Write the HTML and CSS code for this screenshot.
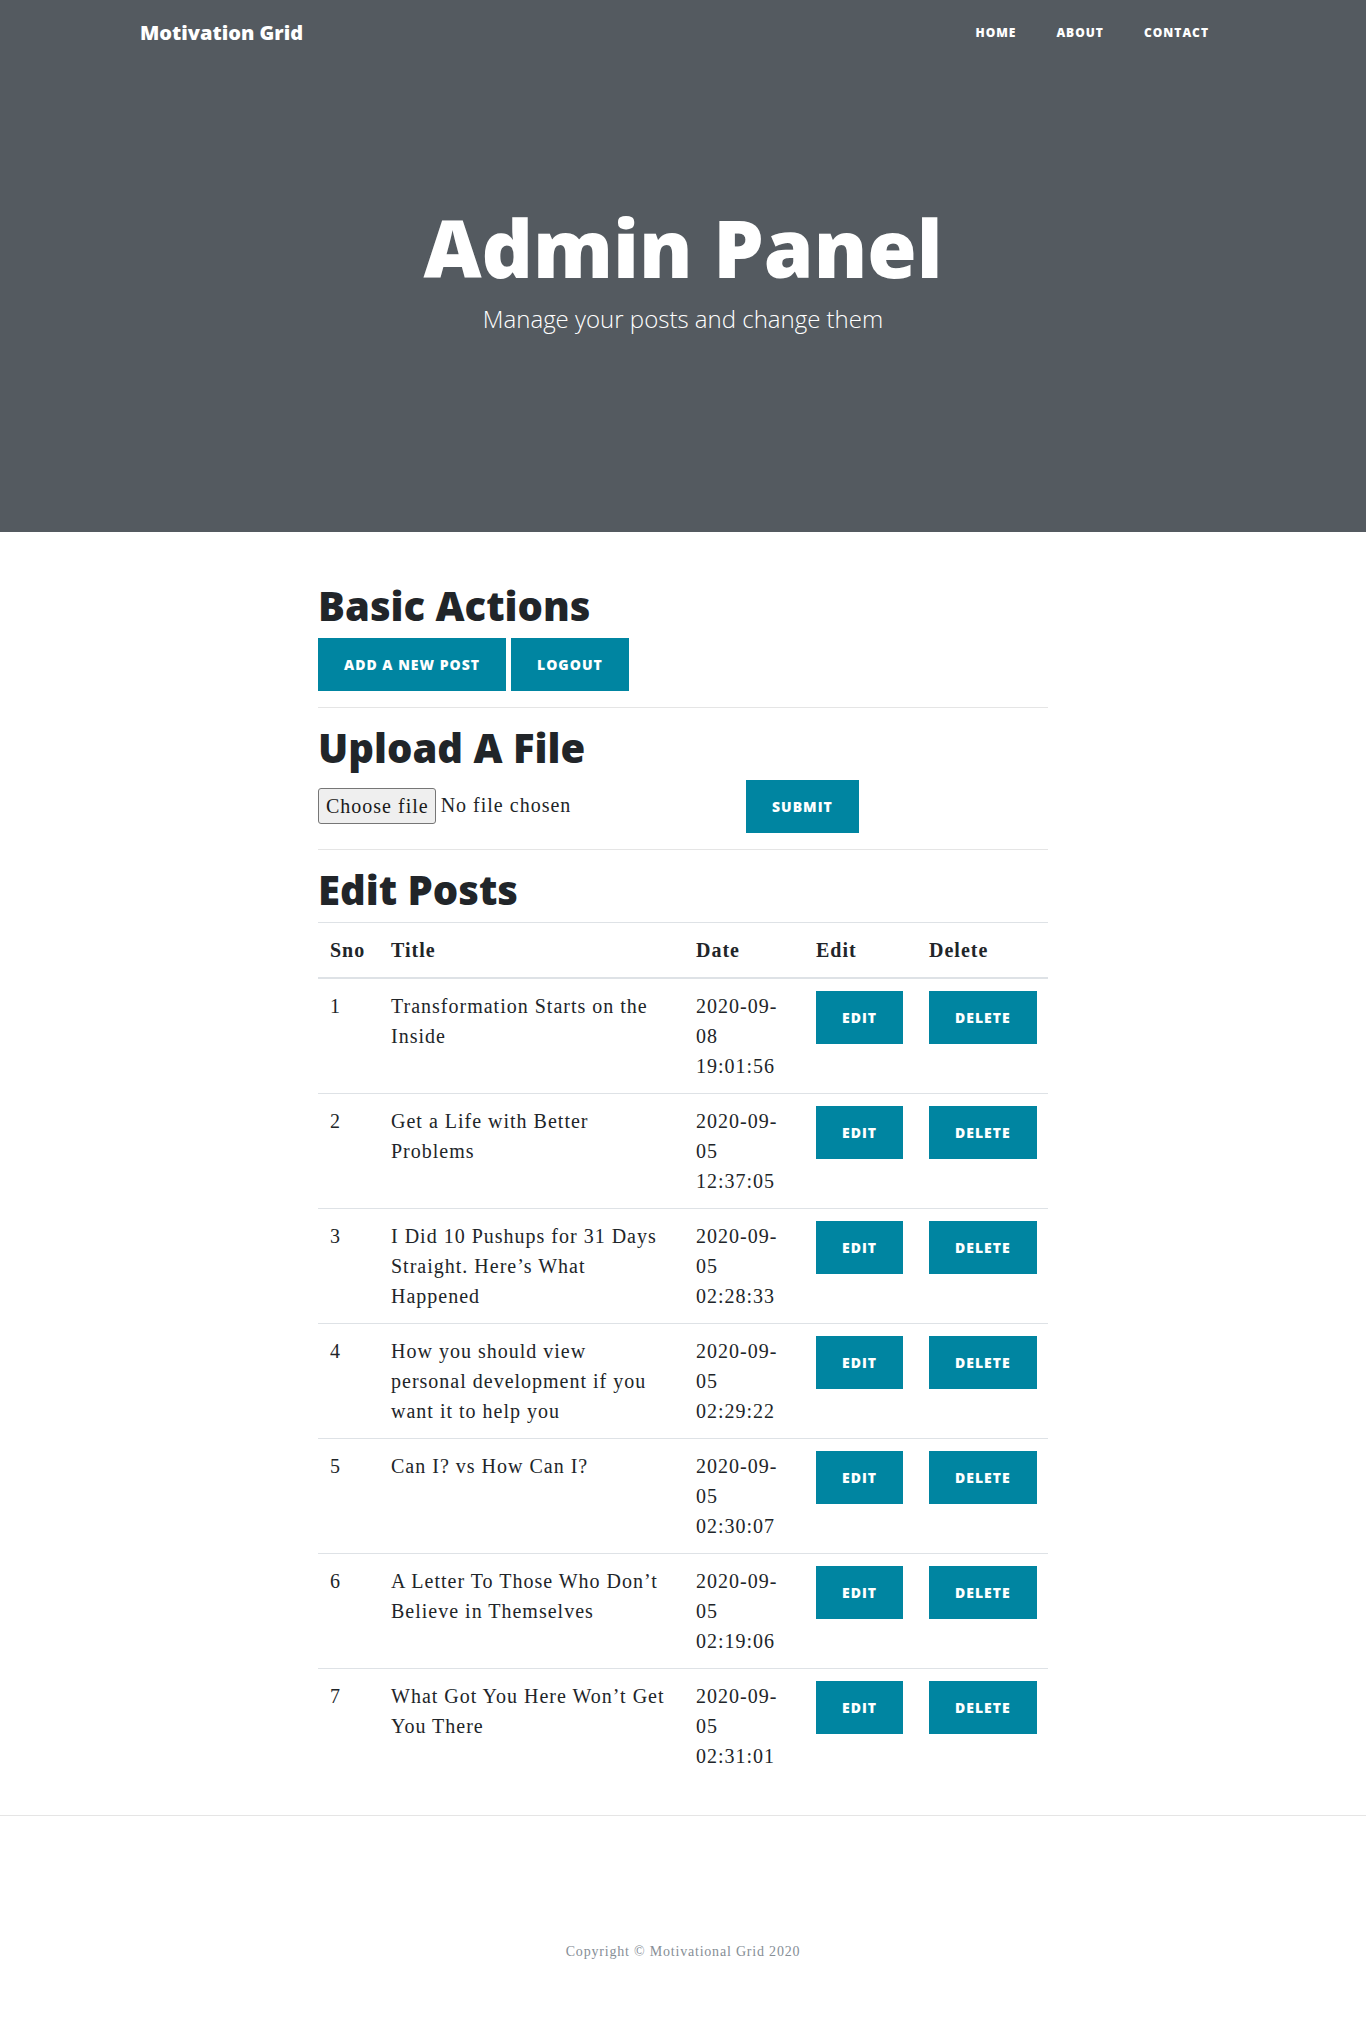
FILE: index.html
```html
<!DOCTYPE html>
<html lang="en">
<head>
<meta charset="utf-8">
<title>Admin Panel - Motivation Grid</title>
<link rel="stylesheet" href="styles.css">
</head>
<body>
<header class="masthead">
  <nav class="topnav">
    <div class="topnav-inner">
      <a class="brand" href="#">Motivation Grid</a>
      <ul class="nav-links">
        <li><a href="#">Home</a></li>
        <li><a href="#">About</a></li>
        <li><a href="#">Contact</a></li>
      </ul>
    </div>
  </nav>
  <div class="page-heading">
    <h1>Admin Panel</h1>
    <span class="subheading">Manage your posts and change them</span>
  </div>
</header>

<main class="content">
  <h1 class="section-title">Basic Actions</h1>
  <div class="actions">
    <a class="btn" href="#">Add a new post</a>
    <a class="btn" href="#">Logout</a>
  </div>
  <hr>
  <h1 class="section-title">Upload A File</h1>
  <form class="upload">
    <label class="file-picker">
      <input class="file-native" type="file" name="file1">
      <span class="file-btn">Choose file</span>
      <span class="file-name">No file chosen</span>
    </label>
    <button class="btn" type="button">Submit</button>
  </form>
  <hr>
  <h1 class="section-title">Edit Posts</h1>
  <table class="posts">
    <colgroup>
      <col class="c-sno"><col class="c-title"><col class="c-date"><col class="c-edit"><col class="c-del">
    </colgroup>
    <thead>
      <tr><th>Sno</th><th>Title</th><th>Date</th><th>Edit</th><th>Delete</th></tr>
    </thead>
    <tbody>
      <tr><td>1</td><td class="title">Transformation Starts on the<br>Inside</td><td>2020-09-08 19:01:56</td><td><a class="btn" href="#">Edit</a></td><td><a class="btn" href="#">Delete</a></td></tr>
      <tr><td>2</td><td class="title">Get a Life with Better<br>Problems</td><td>2020-09-05 12:37:05</td><td><a class="btn" href="#">Edit</a></td><td><a class="btn" href="#">Delete</a></td></tr>
      <tr><td>3</td><td class="title">I Did 10 Pushups for 31 Days<br>Straight. Here’s What<br>Happened</td><td>2020-09-05 02:28:33</td><td><a class="btn" href="#">Edit</a></td><td><a class="btn" href="#">Delete</a></td></tr>
      <tr><td>4</td><td class="title">How you should view<br>personal development if you<br>want it to help you</td><td>2020-09-05 02:29:22</td><td><a class="btn" href="#">Edit</a></td><td><a class="btn" href="#">Delete</a></td></tr>
      <tr><td>5</td><td class="title">Can I? vs How Can I?</td><td>2020-09-05 02:30:07</td><td><a class="btn" href="#">Edit</a></td><td><a class="btn" href="#">Delete</a></td></tr>
      <tr><td>6</td><td class="title">A Letter To Those Who Don’t<br>Believe in Themselves</td><td>2020-09-05 02:19:06</td><td><a class="btn" href="#">Edit</a></td><td><a class="btn" href="#">Delete</a></td></tr>
      <tr><td>7</td><td class="title">What Got You Here Won’t Get<br>You There</td><td>2020-09-05 02:31:01</td><td><a class="btn" href="#">Edit</a></td><td><a class="btn" href="#">Delete</a></td></tr>
    </tbody>
  </table>
</main>

<hr class="page-rule">

<footer class="footer">
  <p class="copyright">Copyright © Motivational Grid 2020</p>
</footer>
</body>
</html>
```
FILE: styles.css
```css
* { box-sizing: border-box; }

body {
  margin: 0;
  font-family: "Liberation Serif", "Times New Roman", serif;
  font-size: 20px;
  line-height: 1.5;
  color: #212529;
  background: #fff;
}

/* Header */
.masthead {
  background: #545a60;
  color: #fff;
  margin-bottom: 50px;
}

.topnav-inner {
  width: 1140px;
  margin: 0 auto;
  padding: 0 24px 0 27px;
  height: 66px;
  display: flex;
  align-items: center;
  justify-content: space-between;
}

.brand {
  font-family: "Open Sans", sans-serif;
  font-weight: 800;
  font-size: 20px;
  color: #fff;
  text-decoration: none;
}

.nav-links {
  display: flex;
  list-style: none;
  margin: 0;
  padding: 0;
}

.nav-links a {
  display: block;
  padding: 10px 20px;
  font-family: "Open Sans", sans-serif;
  font-size: 12px;
  font-weight: 800;
  letter-spacing: 1px;
  text-transform: uppercase;
  color: #fff;
  text-decoration: none;
}

.page-heading {
  text-align: center;
  padding: 133px 0 200px;
}

.page-heading h1 {
  font-family: "Open Sans", sans-serif;
  font-weight: 800;
  font-size: 80px;
  line-height: 1.2;
  margin: 0 0 8px;
}

.subheading {
  display: block;
  font-family: "Open Sans", sans-serif;
  font-weight: 300;
  font-size: 24px;
  line-height: 1.1;
  margin-top: 11px;
}

/* Main content */
.content {
  display: flow-root;
  width: 730px;
  margin: 0 auto;
}

.section-title {
  font-family: "Open Sans", sans-serif;
  font-weight: 800;
  font-size: 40px;
  line-height: 1.2;
  margin: 0 0 8px;
}

.btn {
  display: inline-block;
  font-family: "Open Sans", sans-serif;
  font-size: 14px;
  font-weight: 800;
  letter-spacing: 1px;
  text-transform: uppercase;
  line-height: 1.5;
  padding: 15px 25px;
  border: 1px solid #0085a1;
  border-radius: 0;
  background: #0085a1;
  color: #fff;
  text-decoration: none;
  vertical-align: middle;
  cursor: pointer;
}

.actions {
  display: flex;
  gap: 5px;
}

.upload {
  display: flex;
  align-items: center;
  gap: 5px;
  margin: 0;
}

.file-picker {
  position: relative;
  width: 423px;
  display: flex;
  align-items: center;
  letter-spacing: 1px;
  cursor: pointer;
}

.file-native {
  position: absolute;
  width: 1px;
  height: 1px;
  opacity: 0;
  overflow: hidden;
}

.file-btn {
  display: inline-block;
  padding: 2px 6px 2px 7px;
  margin-right: 5px;
  margin-top: -2px;
  background: #efefef;
  border: 1px solid #767676;
  border-radius: 3px;
  color: #1a1a1a;
  line-height: 30px;
}

.file-name {
  color: #212529;
  line-height: 30px;
  margin-top: -3px;
}

hr {
  height: 0;
  margin: 16px 0;
  border: 0;
  border-top: 1px solid rgba(0, 0, 0, 0.1);
}

/* Table */
.posts {
  width: 100%;
  table-layout: fixed;
  border-collapse: collapse;
  margin-bottom: 16px;
  letter-spacing: 1px;
}

.c-sno { width: 61px; }
.c-title { width: 305px; }
.c-date { width: 120px; }
.c-edit { width: 113px; }
.c-del { width: 131px; }

.posts th,
.posts td {
  padding: 12px;
  vertical-align: top;
  text-align: left;
  border-top: 1px solid #dee2e6;
}

.posts thead th {
  vertical-align: bottom;
  border-bottom: 2px solid #dee2e6;
  font-weight: 700;
}

.posts .title { white-space: nowrap; }

/* Footer */
.page-rule { margin: 16px 0; }

.footer {
  padding: 109px 0 65px;
}

.copyright {
  margin: 0;
  text-align: center;
  font-size: 14px;
  letter-spacing: 0.8px;
  color: #868e96;
}
```
